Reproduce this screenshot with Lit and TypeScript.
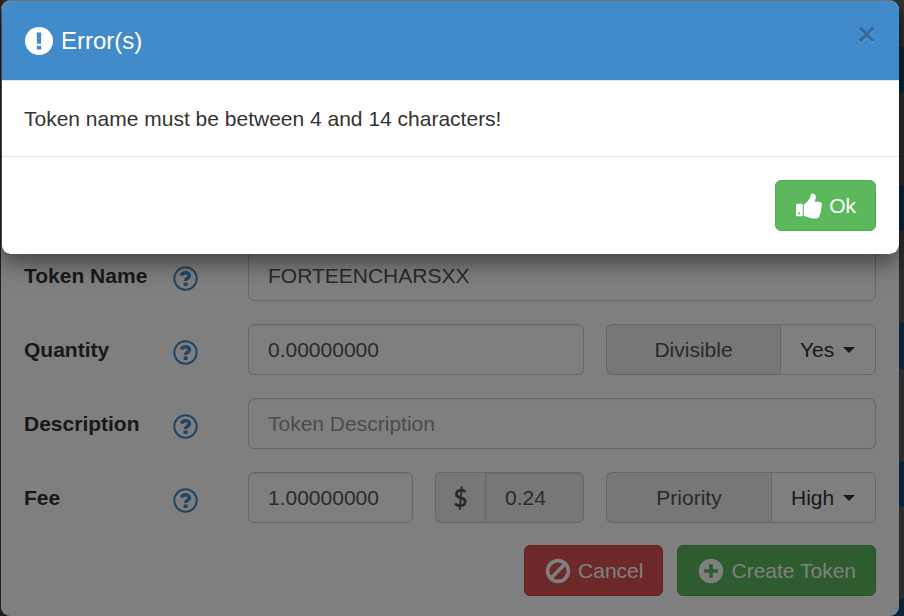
import { LitElement, html, css, svg } from "lit";
import { customElement, property, state } from "lit/decorators.js";

const icons = {
  alert: svg`<svg viewBox="0 0 28 28" width="28" height="28" aria-hidden="true">
    <circle cx="14" cy="14" r="14" fill="#fff"/>
    <path d="M11.700 5.400h4.600l-.3 11.400h-4zM11.800 18.700h4.400v3.900h-4.400z" fill="#428bca"/></svg>`,
  thumb: svg`<svg viewBox="64 100 1600 1600" width="26" height="26" aria-hidden="true">
    <path fill="currentColor" d="M320 1344q0-26-19-45t-45-19q-27 0-45.500 19t-18.500 45q0 27 18.500 45.500t45.500 18.500q26 0 45-18.500t19-45.500zm160-512v640q0 26-19 45t-45 19h-288q-26 0-45-19t-19-45v-640q0-26 19-45t45-19h288q26 0 45 19t19 45zm1184 0q0 86-55 149 15 44 15 76 3 76-43 137 17 56 0 117-15 57-54 94 9 112-49 181-64 76-197 78h-129q-66 0-144-15.500t-121.500-29-120.500-39.500q-123-43-158-44-26-1-45-19.500t-19-44.500v-641q0-25 18-43.500t43-20.500q24-2 76-59t101-121q68-87 101-120 18-18 31-48t17.500-48.500 13.500-60.500q7-39 12.500-61t19.500-52 34-50q19-19 45-19 46 0 82.500 10.500t60 26 40 40.500 24 45 12 50 5 45 .5 39q0 38-9.500 76t-19 60-27.500 56q-3 6-10 18t-11 22-8 24h277q78 0 135 57t57 135z"/></svg>`,
  ban: svg`<svg viewBox="0 0 26 26" width="26" height="26" aria-hidden="true">
    <g fill="none" stroke="currentColor" stroke-width="3.6"><circle cx="13" cy="13" r="10.4"/><path d="M20.2 5.800 5.800 20.200"/></g></svg>`,
  plus: svg`<svg viewBox="0 0 26 26" width="26" height="26" aria-hidden="true">
    <path fill="currentColor" fill-rule="evenodd" d="M13 .8a12.200 12.200 0 1 0 0 24.400 12.200 12.200 0 0 0 0-24.400zM11.200 6.200h3.600v5h5v3.600h-5v5h-3.600v-5h-5v-3.600h5z"/></svg>`,
  help: svg`<svg viewBox="0 0 25 25" width="25" height="25" aria-hidden="true">
    <circle cx="12.500" cy="12.500" r="11.200" fill="none" stroke="currentColor" stroke-width="2"/>
    <path d="M8.300 9.400c1-1.800 2.400-2.600 4.300-2.600 2.200 0 3.800 1.300 3.800 2.900 0 2.700-3.800 2.500-3.800 5.300" fill="none" stroke="currentColor" stroke-width="3.600"/>
    <path d="M10.600 16.500h4v3.500h-4z" fill="currentColor"/></svg>`,
  caret: svg`<svg class="caret" viewBox="0 0 12 6" width="12" height="6" aria-hidden="true"><path d="M0 0h12L6 6z" fill="currentColor"/></svg>`,
};

const shared = css`
  * { box-sizing: border-box; }
  svg { display: block; flex: none; }
  button, input, select { font: inherit; margin: 0; }
  .btn {
    display: inline-flex; align-items: center; justify-content: center; gap: 7px;
    height: 51px; padding: 0 19px 0 20px; border: 1px solid; border-radius: 6px;
    color: #fff; cursor: pointer; white-space: nowrap;
  }
  .success { background: #5cb85c; border-color: #4cae4c; }
  .danger { background: #d9534f; border-color: #d43f3a; }
`;

@customElement("token-form")
class TokenForm extends LitElement {
  static styles = [shared, css`
    :host { display: block; }
    .panel {
      display: flex; flex-direction: column; justify-content: flex-end;
      min-height: 100vh; padding: 23px 23px 20px; background: #fff;
      border-radius: 9px; box-shadow: 0 8px 23px rgba(0, 0, 0, 0.5);
    }
    .rows { display: grid; gap: 23px; }
    .row { display: grid; grid-template-columns: 149px 75px minmax(0, 1fr); align-items: center; }
    .label { font-weight: 700; color: #333; }
    .help { display: block; width: 25px; padding-top: 5px; color: #428bca; }
    .fields { display: grid; grid-template-columns: 165fr 149fr 270fr; gap: 22px; }
    .full { grid-column: span 3; }
    .wide { grid-column: span 2; }
    .input {
      width: 100%; min-width: 0; height: 51px; padding: 0 19px; color: #555;
      background: #fff; border: 1px solid #ccc; border-radius: 6px;
      box-shadow: inset 0 1px 2px rgba(0, 0, 0, 0.1);
    }
    .input::placeholder { color: #999; opacity: 1; }
    .group { display: flex; height: 51px; min-width: 0; }
    .addon {
      display: flex; align-items: center; justify-content: center;
      background: #eee; color: #555; border: 1px solid #ccc; border-right: 0;
      border-radius: 6px 0 0 6px;
    }
    .grow { flex: 1; }
    .currency { flex: none; width: 50px; font-weight: 700; font-size: 24px; font-family: Lato, sans-serif; }
    .joined { border-radius: 0 6px 6px 0; }
    .readonly { background: #eee; }
    .pick { display: grid; align-items: center; }
    .select {
      grid-area: 1 / 1; height: 51px; padding: 0 40px 0 19px; appearance: none;
      background: #fff; color: #333; border: 1px solid #ccc; border-radius: 0 6px 6px 0;
    }
    .caret { grid-area: 1 / 1; justify-self: end; margin-right: 21px; color: #333; pointer-events: none; }
    .actions { display: flex; justify-content: flex-end; gap: 14px; margin-top: 22px; }
  `];

  private label(id: string, text: string) {
    return html`<label class="label" for=${id}>${text}</label>
      <a class="help" href="#" aria-labelledby=${id}>${icons.help}</a>`;
  }

  private picker(id: string, text: string, value: string) {
    return html`<div class="group">
      <label class="addon grow" for=${id}>${text}</label>
      <div class="pick"><select class="select" id=${id}><option>${value}</option></select>${icons.caret}</div>
    </div>`;
  }

  render() {
    return html`<form class="panel" @submit=${(e: Event) => e.preventDefault()}>
      <div class="rows">
        <div class="row">${this.label("name", "Token Name")}
          <div class="fields"><input class="input full" id="name" value="FORTEENCHARSXX"></div>
        </div>
        <div class="row">${this.label("quantity", "Quantity")}
          <div class="fields">
            <input class="input wide" id="quantity" value="0.00000000">
            ${this.picker("divisible", "Divisible", "Yes")}
          </div>
        </div>
        <div class="row">${this.label("description", "Description")}
          <div class="fields"><input class="input full" id="description" placeholder="Token Description"></div>
        </div>
        <div class="row">${this.label("fee", "Fee")}
          <div class="fields">
            <input class="input" id="fee" value="1.00000000">
            <div class="group">
              <label class="addon currency" for="usd">$</label>
              <input class="input joined readonly" id="usd" value="0.24" readonly>
            </div>
            ${this.picker("priority", "Priority", "High")}
          </div>
        </div>
      </div>
      <div class="actions">
        <button class="btn danger" type="button">${icons.ban}Cancel</button>
        <button class="btn success" type="submit">${icons.plus}Create Token</button>
      </div>
    </form>`;
  }
}

@customElement("error-dialog")
class ErrorDialog extends LitElement {
  @property() message = "";

  static styles = [shared, css`
    :host { display: block; }
    .dialog {
      background: #fff; background-clip: padding-box; color: #333;
      border-left: 1px solid rgba(0, 0, 0, 0.2);
      border-radius: 9px; overflow: hidden; box-shadow: 0 8px 23px rgba(0, 0, 0, 0.5);
    }
    .header {
      display: flex; align-items: center; gap: 8px; height: 80px; padding: 0 23px;
      background: #428bca; color: #fff; border-bottom: 1px solid #e5e5e5;
    }
    .title { flex: 1; margin: 0; font-size: 24px; font-weight: 400; line-height: 34px; }
    .close {
      align-self: flex-start; padding: 0; margin-top: 17px; border: 0; background: none; cursor: pointer;
      font-size: 32px; font-weight: 700; line-height: 32px; color: #000; opacity: 0.2;
      text-shadow: 0 1px 0 #fff;
    }
    .body { margin: 0; padding: 23px 22px 22px; line-height: 30px; }
    .footer { display: flex; justify-content: flex-end; padding: 23px; border-top: 1px solid #e5e5e5; }
  `];

  private dismiss() {
    this.dispatchEvent(new CustomEvent("dismiss"));
  }

  render() {
    return html`<div class="dialog" role="alertdialog" aria-modal="true" aria-labelledby="title" aria-describedby="message">
      <div class="header">
        ${icons.alert}
        <h4 class="title" id="title">Error(s)</h4>
        <button class="close" type="button" @click=${this.dismiss}>×</button>
      </div>
      <p class="body" id="message">${this.message}</p>
      <div class="footer">
        <button class="btn success" type="button" @click=${this.dismiss}>${icons.thumb}Ok</button>
      </div>
    </div>`;
  }
}

@customElement("app-root")
class AppRoot extends LitElement {
  @state() private open = true;

  static styles = css`
    :host {
      display: block; position: relative; min-height: 100vh; overflow: hidden;
      font: 21px/30px "Liberation Sans", Arial, sans-serif;
      background: #555;
    }
    .page {
      padding: 0 5px 0 1px;
      background: repeating-linear-gradient(#6c7272 0 47px, #1a5a8a 47px 93px, #6c7272 93px 138px) right / 50% 100% no-repeat;
    }
    .backdrop { position: absolute; inset: 0; background: rgba(0, 0, 0, 0.5); padding: 1px 5px 0 1px; }
  `;

  render() {
    return html`
      <div class="page"><token-form></token-form></div>
      ${this.open
        ? html`<div class="backdrop">
            <error-dialog
              message="Token name must be between 4 and 14 characters!"
              @dismiss=${() => (this.open = false)}
            ></error-dialog>
          </div>`
        : null}
    `;
  }
}
